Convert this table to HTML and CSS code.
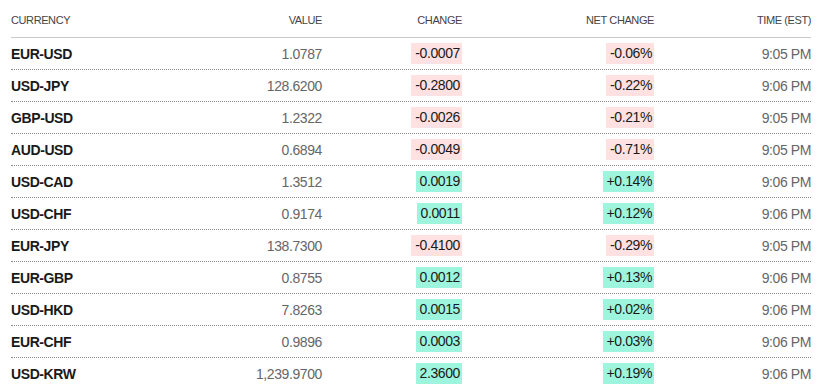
FILE: index.html
```html
<!DOCTYPE html>
<html>
<head>
<meta charset="utf-8">
<link rel="stylesheet" href="styles.css">
</head>
<body>
<div class="table">
  <div class="row head">
    <div class="c name">CURRENCY</div>
    <div class="c">VALUE</div>
    <div class="c">CHANGE</div>
    <div class="c">NET CHANGE</div>
    <div class="c">TIME (EST)</div>
  </div>
  <div class="row"><div class="c name">EUR-USD</div><div class="c val">1.0787</div><div class="c"><span class="pill neg">-0.0007</span></div><div class="c"><span class="pill neg">-0.06%</span></div><div class="c val">9:05 PM</div></div>
  <div class="row"><div class="c name">USD-JPY</div><div class="c val">128.6200</div><div class="c"><span class="pill neg">-0.2800</span></div><div class="c"><span class="pill neg">-0.22%</span></div><div class="c val">9:06 PM</div></div>
  <div class="row"><div class="c name">GBP-USD</div><div class="c val">1.2322</div><div class="c"><span class="pill neg">-0.0026</span></div><div class="c"><span class="pill neg">-0.21%</span></div><div class="c val">9:05 PM</div></div>
  <div class="row"><div class="c name">AUD-USD</div><div class="c val">0.6894</div><div class="c"><span class="pill neg">-0.0049</span></div><div class="c"><span class="pill neg">-0.71%</span></div><div class="c val">9:05 PM</div></div>
  <div class="row"><div class="c name">USD-CAD</div><div class="c val">1.3512</div><div class="c"><span class="pill pos">0.0019</span></div><div class="c"><span class="pill pos">+0.14%</span></div><div class="c val">9:06 PM</div></div>
  <div class="row"><div class="c name">USD-CHF</div><div class="c val">0.9174</div><div class="c"><span class="pill pos">0.0011</span></div><div class="c"><span class="pill pos">+0.12%</span></div><div class="c val">9:06 PM</div></div>
  <div class="row"><div class="c name">EUR-JPY</div><div class="c val">138.7300</div><div class="c"><span class="pill neg">-0.4100</span></div><div class="c"><span class="pill neg">-0.29%</span></div><div class="c val">9:05 PM</div></div>
  <div class="row"><div class="c name">EUR-GBP</div><div class="c val">0.8755</div><div class="c"><span class="pill pos">0.0012</span></div><div class="c"><span class="pill pos">+0.13%</span></div><div class="c val">9:06 PM</div></div>
  <div class="row"><div class="c name">USD-HKD</div><div class="c val">7.8263</div><div class="c"><span class="pill pos">0.0015</span></div><div class="c"><span class="pill pos">+0.02%</span></div><div class="c val">9:06 PM</div></div>
  <div class="row"><div class="c name">EUR-CHF</div><div class="c val">0.9896</div><div class="c"><span class="pill pos">0.0003</span></div><div class="c"><span class="pill pos">+0.03%</span></div><div class="c val">9:06 PM</div></div>
  <div class="row"><div class="c name">USD-KRW</div><div class="c val">1,239.9700</div><div class="c"><span class="pill pos">2.3600</span></div><div class="c"><span class="pill pos">+0.19%</span></div><div class="c val">9:06 PM</div></div>
</div>
</body>
</html>
```

FILE: styles.css
```css
html, body {
  margin: 0;
  padding: 0;
  background: #fff;
}
body {
  padding: 0 15px 0 11px;
  font-family: "Liberation Sans", Arial, sans-serif;
  color: #222;
}
.table {
  width: 800px;
}
.row {
  display: grid;
  grid-template-columns: 160px 151px 140px 192px 157px;
  align-items: center;
  height: 31px;
  border-bottom: 1px dotted #8a8a8a;
}
.row.head {
  height: 37px;
  border-bottom: 1px solid #c9c9c9;
}
.c {
  text-align: right;
  font-size: 14px;
  letter-spacing: -0.4px;
}
.row.head .c {
  padding-top: 3px;
  font-size: 11px;
  letter-spacing: -0.4px;
  font-weight: normal;
  color: #444;
}
.c.name {
  text-align: left;
  font-weight: bold;
  color: #1a1a1a;
}
.c.val {
  color: #666;
}
.pill {
  display: inline-block;
  height: 21px;
  line-height: 21px;
  padding: 0 2px 0 4px;
  margin-top: -1px;
  color: #1a1a1a;
}
.pill.neg {
  background: #ffe1e1;
}
.pill.pos {
  background: #9ef5de;
}
```
